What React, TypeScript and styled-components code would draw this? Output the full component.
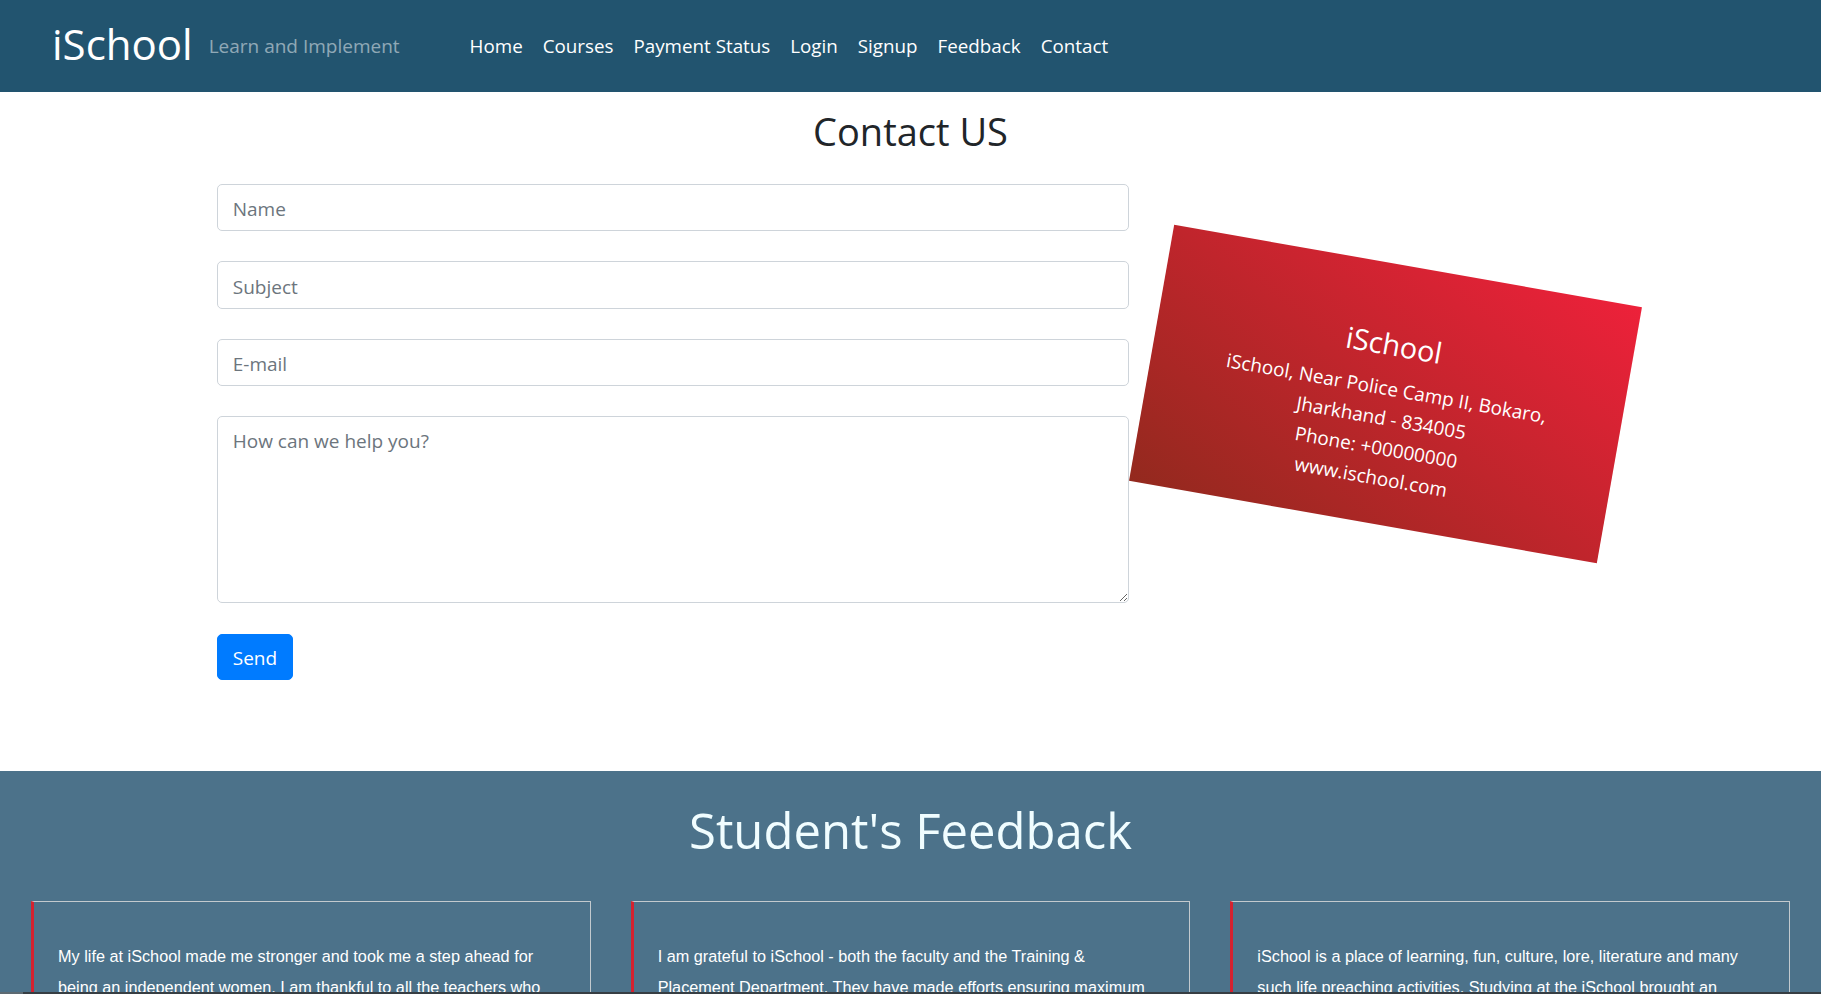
import React, { FC } from 'react';
import styled, { createGlobalStyle } from 'styled-components';

const GlobalStyle = createGlobalStyle`
    html {
        scrollbar-width: none;
    }
    html::-webkit-scrollbar {
        display: none;
    }
    body {
        margin: 0;
        font-family: "Open Sans", "Noto Sans", sans-serif;
        font-size: 19px;
        line-height: 1.5;
        color: #212529;
        background: #fff;
    }
    * {
        box-sizing: border-box;
    }
`;

const links = ['Home', 'Courses', 'Payment Status', 'Login', 'Signup', 'Feedback', 'Contact'];

const feedbacks = [
    'My life at iSchool made me stronger and took me a step ahead for being an independent women. I am thankful to all the teachers who supported me and guided me throughout my journey.',
    'I am grateful to iSchool - both the faculty and the Training & Placement Department. They have made efforts ensuring maximum students are placed in well-known companies.',
    'iSchool is a place of learning, fun, culture, lore, literature and many such life preaching activities. Studying at the iSchool brought an overall development in my personality.',
];

const Navbar: FC = () => (
    <NavStyled>
        <BrandStyled>iSchool</BrandStyled>
        <TaglineStyled>Learn and Implement</TaglineStyled>
        <NavListStyled>
            {links.map((l) => (
                <NavLinkStyled key={l} href="#">{l}</NavLinkStyled>
            ))}
        </NavListStyled>
    </NavStyled>
);

const ContactForm: FC = () => (
    <FormStyled onSubmit={(e) => e.preventDefault()}>
        <InputStyled type="text" placeholder="Name" />
        <InputStyled type="text" placeholder="Subject" />
        <InputStyled type="email" placeholder="E-mail" />
        <TextAreaStyled placeholder="How can we help you?" />
        <SendButton type="submit">Send</SendButton>
    </FormStyled>
);

const AddressCard: FC = () => (
    <CardColumn>
        <RedCard>
            <CardTitle>iSchool</CardTitle>
            <CardLine>iSchool, Near Police Camp II, Bokaro,</CardLine>
            <CardLine>Jharkhand - 834005</CardLine>
            <CardLine>Phone: +00000000</CardLine>
            <CardLine>www.ischool.com</CardLine>
        </RedCard>
    </CardColumn>
);

const Feedback: FC = () => (
    <FeedbackSection>
        <FeedbackTitle>Student's Feedback</FeedbackTitle>
        <FeedbackGrid>
            {feedbacks.map((f, i) => (
                <FeedbackCard key={i}>
                    <FeedbackText>{f}</FeedbackText>
                </FeedbackCard>
            ))}
        </FeedbackGrid>
    </FeedbackSection>
);

const App: FC = () => {
    return (
        <>
            <GlobalStyle />
            <Navbar />
            <ContainerStyled>
                <HeadingStyled>Contact US</HeadingStyled>
                <RowStyled>
                    <FormColumn>
                        <ContactForm />
                    </FormColumn>
                    <AddressCard />
                </RowStyled>
            </ContainerStyled>
            <Feedback />
            <ScrollStrip />
        </>
    );
};

export default App;

const NavStyled = styled.nav`
    display: flex;
    align-items: center;
    height: 92px;
    padding: 0 52px;
    background: #22546f;
`;

const BrandStyled = styled.a`
    font-size: 42px;
    line-height: 1.4;
    color: #fff;
    margin-right: 16px;
    padding-bottom: 4px;
`;

const TaglineStyled = styled.span`
    color: rgba(255, 255, 255, 0.5);
    margin-right: 60px;
`;

const NavListStyled = styled.div`
    display: flex;
    align-items: center;
`;

const NavLinkStyled = styled.a`
    color: #fff;
    font-size: 18.8px;
    text-decoration: none;
    padding: 10px 10px;
`;

const ContainerStyled = styled.main`
    max-width: 1425px;
    margin: 0 auto;
    padding-bottom: 91px;
`;

const HeadingStyled = styled.h2`
    margin: 17px 0 29px;
    font-size: 38px;
    font-weight: 400;
    line-height: 1.2;
    text-align: center;
`;

const RowStyled = styled.div`
    display: flex;
`;

const FormColumn = styled.div`
    flex: 0 0 950px;
    padding: 0 18.75px;
`;

const FormStyled = styled.form`
    display: flex;
    flex-direction: column;
    align-items: flex-start;
`;

const InputStyled = styled.input`
    width: 100%;
    height: 47.5px;
    margin-bottom: 30px;
    padding: 9.5px 15px 5.5px;
    font: inherit;
    color: #495057;
    border: 1px solid #ced4da;
    border-radius: 5px;
    outline: none;

    &::placeholder {
        color: #6c757d;
    }
`;

const TextAreaStyled = styled.textarea`
    width: 100%;
    height: 187px;
    margin-bottom: 31px;
    padding: 9.5px 15px 7.5px;
    font: inherit;
    color: #495057;
    border: 1px solid #ced4da;
    border-radius: 5px;
    outline: none;

    &::placeholder {
        color: #6c757d;
    }
`;

const SendButton = styled.button`
    padding: 8.5px 15px 6.5px;
    font: inherit;
    color: #fff;
    background: #007bff;
    border: 1px solid #007bff;
    border-radius: 5px;
`;

const CardColumn = styled.div`
    flex: 0 0 475px;
    padding: 0 18.75px;
`;

const RedCard = styled.div`
    width: 475px;
    height: 260px;
    margin: 80px -18.75px 0;
    padding-top: 32px;
    display: flex;
    flex-direction: column;
    justify-content: center;
    align-items: center;
    color: #fff;
    background: linear-gradient(to top right, #93291e, #ed213a);
    transform: rotate(10deg);
`;

const CardTitle = styled.h3`
    margin: 0 0 12px;
    font-size: 29px;
    font-weight: 400;
    line-height: 1.2;
`;

const CardLine = styled.div`
    line-height: 30px;
    text-align: center;
`;

const FeedbackSection = styled.section`
    background: #4c728a;
    padding: 30px 31px 60px;
`;

const FeedbackTitle = styled.h1`
    margin: 0 0 42px;
    font-size: 49px;
    font-weight: 400;
    line-height: 1.2;
    color: #f0fdff;
    text-align: center;
`;

const FeedbackGrid = styled.div`
    display: grid;
    grid-template-columns: repeat(3, 1fr);
    gap: 40px;
`;

const FeedbackCard = styled.div`
    border: 1px solid #c3cace;
    border-left: 3px solid #d42230;
    padding: 39px 28px 30px 24px;
`;

const FeedbackText = styled.p`
    margin: 0;
    font-family: "Liberation Sans", Arial, sans-serif;
    font-size: 16.25px;
    line-height: 31px;
    color: #fff;
`;

const ScrollStrip = styled.div`
    position: fixed;
    left: 0;
    right: 0;
    bottom: 0;
    height: 2px;
    background: linear-gradient(to right, #5d6a72 0, #5d6a72 23px, #373e43 23px);
`;
